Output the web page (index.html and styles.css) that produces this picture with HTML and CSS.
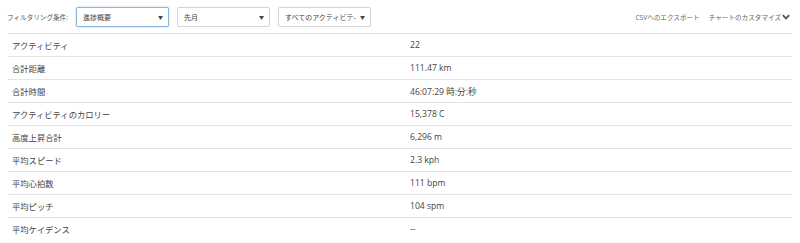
FILE: index.html
```html
<!DOCTYPE html>
<html lang="ja">
<head>
<meta charset="utf-8">
<link rel="stylesheet" href="styles.css">
</head>
<body>
<div class="page">
  <div class="toolbar">
    <div class="filters">
      <span class="label">フィルタリング条件:</span>
      <div class="select select-focus"><span>進捗概要</span><span class="arrow">▼</span></div>
      <div class="select"><span>先月</span><span class="arrow">▼</span></div>
      <div class="select"><span>すべてのアクティビテ-</span><span class="arrow">▼</span></div>
    </div>
    <div class="actions">
      <span class="link">CSVへのエクスポート</span>
      <span class="link">チャートのカスタマイズ<svg class="chev" width="8" height="6" viewBox="0 0 8 6"><path d="M0.8 1.2 L4 4.4 L7.2 1.2" fill="none" stroke="#555" stroke-width="1.8"/></svg></span>
    </div>
  </div>
  <div class="table">
    <div class="row"><span class="key">アクティビティ</span><span class="val">22</span></div>
    <div class="row"><span class="key">合計距離</span><span class="val">111.47 km</span></div>
    <div class="row"><span class="key">合計時間</span><span class="val">46:07:29 時:分:秒</span></div>
    <div class="row"><span class="key">アクティビティのカロリー</span><span class="val">15,378 C</span></div>
    <div class="row"><span class="key">高度上昇合計</span><span class="val">6,296 m</span></div>
    <div class="row"><span class="key">平均スピード</span><span class="val">2.3 kph</span></div>
    <div class="row"><span class="key">平均心拍数</span><span class="val">111 bpm</span></div>
    <div class="row"><span class="key">平均ピッチ</span><span class="val">104 spm</span></div>
    <div class="row"><span class="key">平均ケイデンス</span><span class="val">--</span></div>
  </div>
</div>
</body>
</html>
```
FILE: styles.css
```css
html, body {
  margin: 0;
  padding: 0;
  background: #fff;
}
body {
  font-family: "Open Sans", "Noto Sans CJK JP", sans-serif;
  color: #444;
}
.page {
  padding: 0 8px;
}
.toolbar {
  height: 33px;
  display: flex;
  align-items: center;
  justify-content: space-between;
}
.filters {
  display: flex;
  align-items: center;
  gap: 8px;
}
.label {
  font-size: 6.6px;
  color: #555;
  margin-left: -1px;
}
.select {
  box-sizing: border-box;
  height: 20px;
  width: 93px;
  border: 1px solid #d4d4d4;
  border-radius: 2px;
  display: flex;
  align-items: center;
  justify-content: space-between;
  padding: 0 5px 0 6px;
  font-size: 7px;
  color: #444;
  background: #fff;
}
.select-focus {
  border-color: #8eb3dc;
  box-shadow: 0 0 2px rgba(102, 153, 214, 0.6);
}
.arrow {
  font-size: 5px;
  color: #444;
}
.actions {
  display: flex;
  gap: 9px;
  align-items: center;
  margin-right: 2px;
}
.link {
  font-size: 6.6px;
  color: #666;
  display: flex;
  align-items: center;
}
.chev {
  margin-left: 1px;
}
.row {
  height: 22px;
  border-top: 1px solid #e4e4e4;
  display: flex;
  align-items: center;
}
.key {
  width: 398px;
  padding-left: 4px;
  font-size: 8.3px;
  color: #444;
}
.val {
  font-size: 8.6px;
  color: #444;
}
```
